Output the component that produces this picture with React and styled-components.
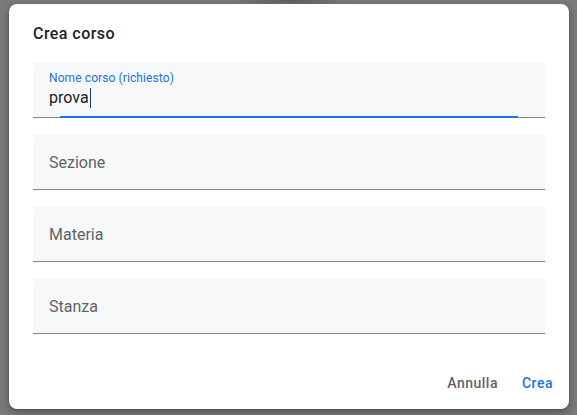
import React from 'react';
import styled, { createGlobalStyle } from 'styled-components';

const GlobalStyle = createGlobalStyle`
  html, body {
    margin: 0;
    padding: 0;
    background: #7b7b7b;
  }
  body {
    font-family: Roboto, 'Liberation Sans', Arial, sans-serif;
  }
`;

const Backdrop = styled.div`
  width: 577px;
  height: 415px;
  box-sizing: border-box;
  padding: 4px 8px 6px 9px;
  background: radial-gradient(ellipse 60px 6px at 290px 0px, #5e5e5e, transparent), #7b7b7b;
`;

const Dialog = styled.div`
  width: 560px;
  height: 405px;
  box-sizing: border-box;
  background: #fff;
  border-radius: 8px;
  box-shadow: 0 1px 3px rgba(0, 0, 0, 0.3), 0 4px 8px 3px rgba(0, 0, 0, 0.15);
  display: flex;
  flex-direction: column;
  padding: 21px 0 8px 0;
`;

const Title = styled.h2`
  margin: 0 24px;
  font-size: 16px;
  line-height: 18px;
  font-weight: 500;
  color: #202124;
  letter-spacing: 0.45px;
`;

const Fields = styled.div`
  margin-top: 19px;
  padding: 0 24px;
  display: flex;
  flex-direction: column;
  gap: 16px;
`;

const Field = styled.div`
  position: relative;
  height: 55px;
  box-sizing: border-box;
  height: 56px;
  background: #f7f8f9;
  border-radius: 4px 4px 0 0;
  border-bottom: 1px solid #80868b;
  padding: ${props => (props.focused ? '0 16px' : '2px 16px 0')};
  display: flex;
  flex-direction: column;
  justify-content: ${props => (props.focused ? 'flex-start' : 'center')};
`;

const FloatLabel = styled.span`
  margin-top: 8px;
  font-size: 12px;
  line-height: 16px;
  color: #1a73e8;
  letter-spacing: 0.1px;
`;

const Value = styled.span`
  display: flex;
  align-items: center;
  margin-top: 2px;
  font-size: 16px;
  line-height: 20px;
  color: #202124;
`;

const Caret = styled.span`
  display: inline-block;
  width: 1px;
  height: 20px;
  margin-left: 1px;
  background: #1f3b6b;
`;

const Placeholder = styled.span`
  font-size: 16px;
  line-height: 20px;
  color: #5f6368;
`;

const FocusLine = styled.span`
  position: absolute;
  left: 27px;
  right: 27px;
  bottom: -1px;
  height: 2px;
  background: #1a73e8;
`;

const Footer = styled.div`
  margin-top: auto;
  display: flex;
  justify-content: flex-end;
  gap: 8px;
  padding-right: 8px;
`;

const Button = styled.button`
  height: 36px;
  padding: 0 8px;
  border: none;
  background: transparent;
  font-family: Roboto, 'Liberation Sans', Arial, sans-serif;
  font-size: 14px;
  font-weight: 500;
  letter-spacing: 0.5px;
  color: ${props => (props.primary ? '#1a73e8' : '#5f6368')};
  cursor: pointer;
`;

const fields = ['Sezione', 'Materia', 'Stanza'];

export default function App() {
  return (
    <Backdrop>
      <GlobalStyle />
      <Dialog>
        <Title>Crea corso</Title>
        <Fields>
          <Field focused>
            <FloatLabel>Nome corso (richiesto)</FloatLabel>
            <Value>
              prova
              <Caret />
            </Value>
            <FocusLine />
          </Field>
          {fields.map(name => (
            <Field key={name}>
              <Placeholder>{name}</Placeholder>
            </Field>
          ))}
        </Fields>
        <Footer>
          <Button>Annulla</Button>
          <Button primary>Crea</Button>
        </Footer>
      </Dialog>
    </Backdrop>
  );
}
